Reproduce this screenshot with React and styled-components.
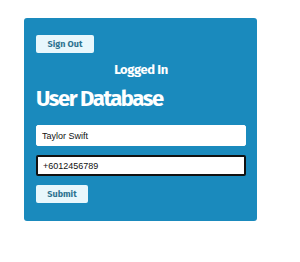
import React from 'react';
import styled, { createGlobalStyle } from 'styled-components';

const Global = createGlobalStyle`
    body {
        margin: 0;
        background: #ffffff;
        font-family: 'Fira Sans', 'Lato', sans-serif;
    }
`;

const Card = styled.div`
    width: 233px;
    margin: 18px 0 0 24px;
    padding: 17px 11px 18px 12px;
    box-sizing: border-box;
    background: #1a8abd;
    border-radius: 3px;
    display: flex;
    flex-direction: column;
    align-items: stretch;
`;

const Button = styled.button`
    width: ${(p) => p.w}px;
    height: 18px;
    padding: 0;
    border: none;
    border-radius: 2px;
    background: #e8f7fc;
    color: #2f7491;
    font-family: 'Fira Sans', 'Lato', sans-serif;
    font-weight: 700;
    font-size: 9px;
`;

const Toolbar = styled.div`
    display: flex;
`;

const Status = styled.div`
    margin-top: 9px;
    text-align: center;
    color: #ffffff;
    font-weight: 700;
    font-size: 13px;
    letter-spacing: -0.4px;
    line-height: 16px;
`;

const Title = styled.h1`
    margin: 8px 0 0;
    color: #ffffff;
    font-weight: 700;
    font-size: 22px;
    letter-spacing: -1.4px;
    line-height: 26px;
`;

const Input = styled.input`
    height: 21px;
    margin-top: ${(p) => p.mt}px;
    padding: 0 5px;
    box-sizing: border-box;
    border: ${(p) => (p.focus ? '2px solid #111' : '1px solid #fff')};
    border-radius: 2px;
    background: #ffffff;
    font-family: 'Liberation Sans', Arial, sans-serif;
    font-size: 9px;
    color: #111;
    outline: none;
`;

const Form = styled.div`
    display: flex;
    flex-direction: column;
`;

const Actions = styled.div`
    display: flex;
    margin-top: 9px;
`;

export default function App() {
    return (
        <>
            <Global />
            <Card>
                <Toolbar>
                    <Button w={58}>Sign Out</Button>
                </Toolbar>
                <Status>Logged In</Status>
                <Title>User Database</Title>
                <Form>
                    <Input mt={13} defaultValue="Taylor Swift" />
                    <Input mt={9} focus defaultValue="+6012456789" />
                    <Actions>
                        <Button w={52}>Submit</Button>
                    </Actions>
                </Form>
            </Card>
        </>
    );
}
